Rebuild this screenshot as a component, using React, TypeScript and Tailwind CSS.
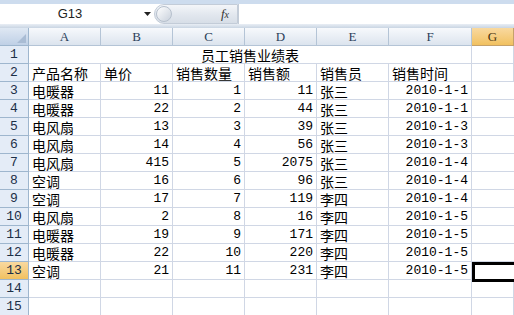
const cols = ["A", "B", "C", "D", "E", "F", "G"];
const widths = ["w-[72px]", "w-[72px]", "w-[72px]", "w-[72px]", "w-[72px]", "w-[83px]", "w-[42px]"];

const data: (string | number)[][] = [
  ["电暖器", 11, 1, 11, "张三", "2010-1-1"],
  ["电暖器", 22, 2, 44, "张三", "2010-1-1"],
  ["电风扇", 13, 3, 39, "张三", "2010-1-3"],
  ["电风扇", 14, 4, 56, "张三", "2010-1-3"],
  ["电风扇", 415, 5, 2075, "张三", "2010-1-4"],
  ["空调", 16, 6, 96, "张三", "2010-1-4"],
  ["空调", 17, 7, 119, "李四", "2010-1-4"],
  ["电风扇", 2, 8, 16, "李四", "2010-1-5"],
  ["电暖器", 19, 9, 171, "李四", "2010-1-5"],
  ["电暖器", 22, 10, 220, "李四", "2010-1-5"],
  ["空调", 21, 11, 231, "李四", "2010-1-5"],
];

const headers = ["产品名称", "单价", "销售数量", "销售额", "销售员", "销售时间"];

const cjk = "font-['Noto_Sans_CJK_SC',sans-serif] text-[14px]";
const mono = "font-['Liberation_Mono','Noto_Sans_CJK_SC',monospace] text-[13px]";

function RowHead({ n }: { n: number }) {
  const active = n === 13;
  return (
    <div
      className={`w-[29px] h-[18px] shrink-0 flex items-center justify-center border-r border-b border-[#9eb6ce] ${mono} text-[#1c2f47] ${
        active ? "bg-gradient-to-b from-[#f9d99f] to-[#f1c15f]" : "bg-[#e4ecf7]"
      }`}
    >
      {n}
    </div>
  );
}

function Cell({
  w,
  children,
  right,
  isDate,
}: {
  w: string;
  children?: React.ReactNode;
  right?: boolean;
  isDate?: boolean;
}) {
  const isNum = typeof children === "number" || isDate;
  return (
    <div
      className={`${w} h-[18px] shrink-0 border-r border-b border-[#d0d7e5] leading-[18px] whitespace-nowrap overflow-hidden px-[3px] text-black ${
        isNum ? mono : cjk
      } ${right ? "text-right" : "text-left"}`}
    >
      {children}
    </div>
  );
}

export default function App() {
  return (
    <div className="w-[514px] h-[315px] overflow-hidden bg-white select-none">
      {/* formula bar */}
      <div className="h-[28px] flex flex-col">
        <div className="h-[4px] bg-[#cddcee]" />
        <div className="h-[20px] flex items-center bg-white">
          <div className="w-[140px] h-full flex items-center justify-center font-['Liberation_Sans',sans-serif] text-[13px] text-[#222]">
            G13
          </div>
          <div className="w-[14px] flex items-center justify-center">
            <svg width="7" height="4" viewBox="0 0 7 4">
              <path d="M0 0h7L3.5 4z" fill="#222" />
            </svg>
          </div>
          <div className="w-[84px] h-[20px] relative flex items-center justify-end pr-[8px] rounded-l-full bg-gradient-to-b from-[#f4f6f9] via-[#e3e8ef] to-[#d7dee7] border border-[#c3ccd8]">
            <div className="absolute left-[1px] top-[1px] w-[16px] h-[16px] rounded-full bg-gradient-to-br from-white to-[#c9d1dc] border border-[#b6c0cd]" />
            <span className="font-['Liberation_Serif',serif] italic text-[13px] text-[#333]">
              f<span className="text-[10px]">x</span>
            </span>
          </div>
          <div className="flex-1 h-full bg-white border-l border-[#c3ccd8]" />
        </div>
        <div className="h-[4px] bg-gradient-to-b from-[#e9eef5] to-[#c9d5e3]" />
      </div>

      {/* column headers */}
      <div className="flex h-[18px]">
        <div className="w-[29px] h-[18px] shrink-0 relative bg-gradient-to-b from-[#dfe8f3] to-[#bfd0e6] border-r border-b border-[#9eb6ce]">
          <svg className="absolute right-[2px] bottom-[2px]" width="9" height="9" viewBox="0 0 9 9">
            <path d="M9 0V9H0z" fill="#a9bcd4" />
          </svg>
        </div>
        {cols.map((c, i) => (
          <div
            key={c}
            className={`${widths[i]} h-[18px] shrink-0 flex items-center justify-center border-r border-b font-['Liberation_Serif',serif] text-[13px] ${
              c === "G"
                ? "bg-gradient-to-b from-[#f9d99f] to-[#f1c15f] border-[#c5a16a] text-[#4a3410]"
                : "bg-gradient-to-b from-[#f7f9fc] to-[#dce4ee] border-[#b4c4d6] text-[#2b3f5a]"
            }`}
          >
            {c}
          </div>
        ))}
      </div>

      {/* row 1 merged title */}
      <div className="flex">
        <RowHead n={1} />
        <div className={`w-[443px] h-[18px] shrink-0 border-r border-b border-[#d0d7e5] leading-[18px] text-center ${cjk} text-black`}>
          员工销售业绩表
        </div>
        <Cell w={widths[6]} />
      </div>

      {/* row 2 headers */}
      <div className="flex">
        <RowHead n={2} />
        {headers.map((h, i) => (
          <Cell key={h} w={widths[i]}>
            {h}
          </Cell>
        ))}
        <Cell w={widths[6]} />
      </div>

      {data.map((r, ri) => (
        <div className="flex" key={ri}>
          <RowHead n={ri + 3} />
          {r.map((v, ci) => (
            <Cell key={ci} w={widths[ci]} right={typeof v === "number" || ci === 5} isDate={ci === 5}>
              {v}
            </Cell>
          ))}
          <div className="w-[42px] h-[18px] shrink-0 relative border-b border-[#d0d7e5]">
            {ri + 3 === 13 && (
              <div className="absolute left-0 top-0 w-[50px] h-[20px] border-[3px] border-black" />
            )}
          </div>
        </div>
      ))}

      {[14, 15].map((n) => (
        <div className="flex" key={n}>
          <RowHead n={n} />
          {widths.map((w, i) => (
            <Cell key={i} w={w} />
          ))}
        </div>
      ))}
    </div>
  );
}
